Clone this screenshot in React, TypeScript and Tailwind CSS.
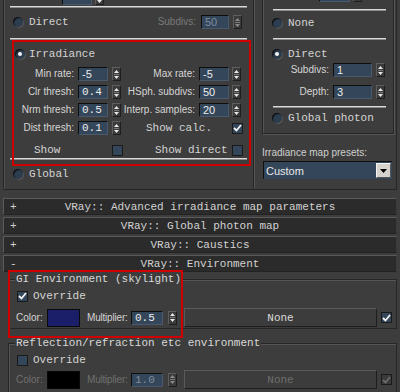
import React from "react";

const MONO = "font-['Liberation_Mono',monospace] text-[11px] leading-[14px]";
const SANS = "font-['Liberation_Sans',Arial,sans-serif] text-[10px] leading-[14px]";
const NUM = "font-['Liberation_Sans',Arial,sans-serif] text-[11px] leading-[14px]";

function Spin({ dim = false }: { dim?: boolean }) {
  const c = dim ? "#8a8a8a" : "#e8e8e8";
  return (
    <div className="w-[9px] h-[14px] shrink-0 flex flex-col items-center justify-center gap-[1px] bg-[#3a3a3a] border border-[#1e1e1e] border-t-[#5e5e5e] border-l-[#5e5e5e]">
      <svg width="5" height="3" viewBox="0 0 5 3">
        <path d="M0 3L2.5 0L5 3Z" fill={c} />
      </svg>
      <div className="w-[5px] h-px bg-[#7a7a7a]" />
      <svg width="5" height="3" viewBox="0 0 5 3">
        <path d="M0 0L5 0L2.5 3Z" fill={c} />
      </svg>
    </div>
  );
}

function Field({
  v,
  w,
  mono = false,
  dim = false,
}: {
  v: string;
  w: string;
  mono?: boolean;
  dim?: boolean;
}) {
  return (
    <div
      className={`${w} h-[14px] shrink-0 flex items-center pl-[3px] bg-[#34465a] border-t border-l border-[#0e0e0e] border-r border-b border-r-[#4a5a6c] border-b-[#4a5a6c] ${
        dim ? "text-[#7d8c9e]" : "text-[#ececec]"
      } ${mono ? MONO : NUM}`}
    >
      {v}
    </div>
  );
}

function Radio({ on = false }: { on?: boolean }) {
  return (
    <div className="w-[10px] h-[10px] shrink-0 rounded-full bg-[#2d3d50] shadow-[inset_1px_1px_1px_#0b0b0b,1px_1px_0_#555] flex items-center justify-center">
      {on && <div className="w-[4px] h-[4px] rounded-full bg-[#f4f4f4]" />}
    </div>
  );
}

function Check({ on = false, dim = false }: { on?: boolean; dim?: boolean }) {
  return (
    <div
      className={`w-[11px] h-[11px] shrink-0 flex items-center justify-center border border-[#1a1a1a] ${
        dim ? "bg-[#3a3a3a]" : "bg-[#34465a]"
      }`}
    >
      {on && (
        <svg width="9" height="8" viewBox="0 0 9 8">
          <path
            d="M1 4L3.5 6.5L8 1"
            fill="none"
            stroke={dim ? "#6a6a6a" : "#f2f2f2"}
            strokeWidth="1.8"
          />
        </svg>
      )}
    </div>
  );
}

function Sep({ w }: { w: string }) {
  return <div className={`${w} h-[2px] bg-[#d9d9d9] border-b border-[#8c8c8c]`} />;
}

function Label({ t, w, dim = false }: { t: string; w: string; dim?: boolean }) {
  return (
    <div className={`${w} shrink-0 text-right whitespace-nowrap ${SANS} ${dim ? "text-[#7a7a7a]" : "text-[#d6d6d6]"}`}>
      {t}
    </div>
  );
}

function ParamRow({
  l1,
  v1,
  m1,
  l2,
  v2,
  m2,
}: {
  l1: string;
  v1: string;
  m1?: boolean;
  l2: string;
  v2: string;
  m2?: boolean;
}) {
  return (
    <div className="h-[18px] flex items-center">
      <Label t={l1} w="w-[64px]" />
      <div className="ml-[4px]">
        <Field v={v1} w="w-[30px]" mono={m1} />
      </div>
      <div className="ml-[4px]">
        <Spin />
      </div>
      <Label t={l2} w="w-[74px]" />
      <div className="ml-[4px]">
        <Field v={v2} w="w-[30px]" mono={m2} />
      </div>
      <div className="ml-[3px]">
        <Spin />
      </div>
    </div>
  );
}

function Bar({ sign, title }: { sign: string; title: string }) {
  return (
    <div className="h-[17px] flex items-center bg-[#2b2b2b] border border-[#5a5a5a] border-b-[#232323] border-r-[#3a3a3a] text-[#d2d2d2]">
      <span className={`w-[24px] pl-[6px] ${MONO}`}>{sign}</span>
      <span className={`flex-1 text-center ${MONO}`}>{title}</span>
      <span className="w-[24px]" />
    </div>
  );
}

function NoneBtn({ dim = false }: { dim?: boolean }) {
  return (
    <div
      className={`w-[193px] h-[19px] shrink-0 flex items-center justify-center bg-[#3c3c3c] border border-[#5a5a5a] border-r-[#1e1e1e] border-b-[#1e1e1e] ${MONO} ${
        dim ? "text-[#6e6e6e]" : "text-[#dadada]"
      }`}
    >
      None
    </div>
  );
}

export default function App() {
  return (
    <div className="w-[400px] h-[392px] overflow-hidden bg-[#3d3d3d] text-[#d4d4d4] flex flex-col">
      {/* top section */}
      <div className="mt-[-9px] ml-[3px] w-[394px] h-[199px] shrink-0 flex border-x border-b border-[#262626] shadow-[inset_1px_0_0_#505050]">
        {/* left group */}
        <div className="w-[250px] h-[197px] shrink-0 border-r border-[#262626] shadow-[1px_0_0_#555] flex flex-col pl-[6px]">
          {/* partial top row */}
          <div className="h-[14px] flex items-center pl-[52px]">
            <Field v="" w="w-[30px]" />
            <div className="ml-[3px]">
              <Spin />
            </div>
          </div>
          <div className="mt-[1px]">
            <Sep w="w-[237px]" />
          </div>
          {/* Direct */}
          <div className="h-[16px] mt-[6px] flex items-center pl-[3px] pr-[11px]">
            <Radio />
            <span className={`ml-[6px] ${MONO}`}>Direct</span>
            <span className={`ml-auto ${SANS} text-[#7a7a7a]`}>Subdivs:</span>
            <div className="ml-[5px]">
              <Field v="50" w="w-[28px]" dim />
            </div>
            <div className="ml-[4px]">
              <Spin dim />
            </div>
          </div>
          <div className="mt-[8px]">
            <Sep w="w-[237px]" />
          </div>
          {/* Irradiance block */}
          <div className="relative flex flex-col">
            <div className="h-[14px] mt-[7px] flex items-center pl-[5px]">
              <Radio on />
              <span className={`ml-[4px] ${MONO}`}>Irradiance</span>
            </div>
            <div className="mt-[4px] flex flex-col">
              <ParamRow l1="Min rate:" v1="-5" l2="Max rate:" v2="-5" />
              <ParamRow l1="Clr thresh:" v1="0.4" m1 l2="HSph. subdivs:" v2="50" />
              <ParamRow l1="Nrm thresh:" v1="0.5" m1 l2="Interp. samples:" v2="20" />
              <div className="h-[18px] flex items-center">
                <Label t="Dist thresh:" w="w-[64px]" />
                <div className="ml-[4px]">
                  <Field v="0.1" w="w-[30px]" mono />
                </div>
                <div className="ml-[4px]">
                  <Spin />
                </div>
                <div className={`w-[111px] pl-[25px] ${MONO}`}>Show calc.</div>
                <Check on />
              </div>
            </div>
            <div className="h-[14px] mt-[6px] flex items-center">
              <div className={`w-[102px] pl-[24px] ${MONO}`}>Show</div>
              <Check />
              <div className={`w-[109px] pl-[32px] ${MONO}`}>Show direct</div>
              <Check />
            </div>
            <div className="mt-[1px]">
              <Sep w="w-[237px]" />
            </div>
            <div className="absolute top-0 left-[2px] w-[239px] h-[126px] border-2 border-[#d00000] pointer-events-none" />
          </div>
          {/* Global */}
          <div className="h-[14px] mt-[7px] flex items-center pl-[3px]">
            <Radio />
            <span className={`ml-[6px] ${MONO}`}>Global</span>
          </div>
        </div>

        {/* right column */}
        <div className="ml-[8px] w-[132px] shrink-0 flex flex-col">
          <div className="h-[143px] shrink-0 border border-[#262626] shadow-[inset_1px_1px_0_#555,1px_1px_0_#555] flex flex-col">
            <div className="h-[10px] flex items-end pl-[56px]">
              <Field v="" w="w-[31px]" />
              <div className="ml-[3px]">
                <Spin />
              </div>
            </div>
            <div className="mt-[7px] pl-[10px]">
              <Sep w="w-[113px]" />
            </div>
            <div className="h-[14px] mt-[5px] flex items-center pl-[9px]">
              <Radio />
              <span className={`ml-[6px] ${MONO}`}>None</span>
            </div>
            <div className="mt-[8px] pl-[10px]">
              <Sep w="w-[113px]" />
            </div>
            <div className="h-[14px] mt-[7px] flex items-center pl-[9px]">
              <Radio on />
              <span className={`ml-[6px] ${MONO}`}>Direct</span>
            </div>
            <div className="h-[14px] mt-[2px] flex items-center">
              <Label t="Subdivs:" w="w-[66px]" />
              <div className="ml-[4px]">
                <Field v="1" w="w-[39px]" />
              </div>
              <div className="ml-[4px]">
                <Spin />
              </div>
            </div>
            <div className="h-[14px] mt-[8px] flex items-center">
              <Label t="Depth:" w="w-[66px]" />
              <div className="ml-[4px]">
                <Field v="3" w="w-[39px]" />
              </div>
              <div className="ml-[4px]">
                <Spin />
              </div>
            </div>
            <div className="mt-[7px] pl-[10px]">
              <Sep w="w-[113px]" />
            </div>
            <div className="h-[14px] mt-[3px] flex items-center pl-[9px]">
              <Radio />
              <span className={`ml-[6px] ${MONO}`}>Global photon</span>
            </div>
          </div>
          <div className={`mt-[13px] h-[12px] flex items-center ${SANS} text-[#d0d0d0]`}>
            Irradiance map presets:
          </div>
          <div className="mt-[2px] ml-[1px] w-[129px] h-[18px] flex items-center bg-[#34465a] border-t border-l border-[#101010]">
            <span className={`pl-[2px] flex-1 ${NUM} text-[#e8e8e8]`}>Custom</span>
            <div className="w-[15px] h-[15px] mr-[1px] flex items-center justify-center bg-[#d6d3cc] border border-[#f4f4f4] border-r-[#555] border-b-[#555]">
              <svg width="7" height="4" viewBox="0 0 7 4">
                <path d="M0 0L7 0L3.5 4Z" fill="#000" />
              </svg>
            </div>
          </div>
        </div>
      </div>

      {/* rollouts */}
      <div className="mt-[8px] ml-[3px] w-[394px] flex flex-col gap-[2px]">
        <Bar sign="+" title="VRay:: Advanced irradiance map parameters" />
        <Bar sign="+" title="VRay:: Global photon map" />
        <Bar sign="+" title="VRay:: Caustics" />
        <Bar sign="-" title="VRay:: Environment" />
      </div>

      {/* environment */}
      <div className="relative flex flex-col">
        <fieldset className="ml-[8px] w-[389px] border border-[#262626] shadow-[inset_1px_1px_0_#555] pb-[1px]">
          <legend className={`ml-[6px] px-[1px] bg-[#3d3d3d] ${MONO} text-[#d8d8d8]`}>
            GI Environment (skylight)
          </legend>
          <div className="h-[14px] mt-[3px] flex items-center pl-[8px]">
            <Check on />
            <span className={`ml-[5px] ${MONO}`}>Override</span>
          </div>
          <div className="h-[19px] mt-[5px] flex items-center">
            <span className={`w-[38px] pl-[7px] ${SANS} text-[#d4d4d4]`}>Color:</span>
            <div className="w-[33px] h-[18px] shrink-0 bg-[#1b1f6a] border border-[#0a0a0a]" />
            <span className={`ml-[7px] w-[40px] whitespace-nowrap tracking-[-0.2px] ${SANS} text-[#d4d4d4]`}>Multiplier:</span>
            <div className="ml-[4px]">
              <Field v="0.5" w="w-[32px]" mono />
            </div>
            <div className="ml-[5px]">
              <Spin />
            </div>
            <div className="ml-[7px]">
              <NoneBtn />
            </div>
            <div className="ml-[4px]">
              <Check on />
            </div>
          </div>
        </fieldset>
        <fieldset className="mt-[7px] ml-[8px] w-[389px] h-[80px] border border-[#262626] shadow-[inset_1px_1px_0_#555]">
          <legend className={`ml-[6px] px-[1px] bg-[#3d3d3d] ${MONO} text-[#d8d8d8]`}>
            Reflection/refraction etc environment
          </legend>
          <div className="h-[14px] mt-[3px] flex items-center pl-[8px]">
            <Check />
            <span className={`ml-[5px] ${MONO}`}>Override</span>
          </div>
          <div className="h-[19px] mt-[3px] flex items-center">
            <span className={`w-[38px] pl-[7px] ${SANS} text-[#707070]`}>Color:</span>
            <div className="w-[33px] h-[18px] shrink-0 bg-[#000000] border border-[#0a0a0a]" />
            <span className={`ml-[7px] w-[40px] whitespace-nowrap tracking-[-0.2px] ${SANS} text-[#707070]`}>Multiplier:</span>
            <div className="ml-[4px]">
              <Field v="1.0" w="w-[32px]" mono dim />
            </div>
            <div className="ml-[5px]">
              <Spin dim />
            </div>
            <div className="ml-[7px]">
              <NoneBtn dim />
            </div>
            <div className="ml-[4px]">
              <Check on dim />
            </div>
          </div>
        </fieldset>
        <div className="absolute top-[-2px] left-[8px] w-[175px] h-[68px] border-2 border-[#d00000] pointer-events-none" />
      </div>
    </div>
  );
}
